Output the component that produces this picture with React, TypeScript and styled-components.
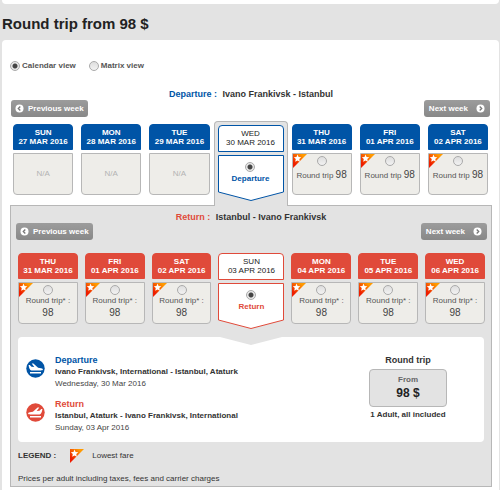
import { useId, useState } from 'react';
import styled, { createGlobalStyle, css } from 'styled-components';

const BLUE = '#0054a6';
const RED = '#e04a3a';
const GREY = '#e3e3e3';
const LINE = '#b7b7b7';

const GlobalStyle = createGlobalStyle`
  * { box-sizing: border-box; }
  body {
    margin: 0;
    background: ${GREY};
    color: #333;
    font: 8px/12px "Liberation Sans", Arial, sans-serif;
  }
  button, input { font: inherit; margin: 0; }
  h1, h2, h3, p { margin: 0; }
`;

const Page = styled.main`
  padding: 0 1px 0 2px;
`;

const PreviousPanel = styled.div`
  height: 4px;
  background: #fff;
  border-radius: 0 0 4px 4px;
`;

const Title = styled.h1`
  padding: 11px 0 7px;
  font-size: 15px;
  line-height: 18px;
  color: #222;
`;

const Panel = styled.section`
  padding: 20px 7px 4px 8px;
  background: #fff;
  border-radius: 4px 4px 0 0;
`;

const ViewSwitch = styled.div`
  display: flex;
  gap: 13px;
  font-weight: bold;
  color: #555;
`;

const Option = styled.label`
  display: flex;
  align-items: center;
  gap: 2px;
`;

const Radio = styled.input.attrs({ type: 'radio' })`
  appearance: none;
  flex: none;
  width: 10px;
  height: 10px;
  border: 1px solid #aaa;
  border-radius: 50%;
  background: linear-gradient(#dedede, #f2f2f2);
  &:checked {
    background: radial-gradient(circle, #444 0 2px, #e8e8e8 3px);
  }
`;

const OutboundTop = styled.header`
  padding-top: 16px;
`;

const Heading = styled.h2`
  text-align: center;
  font-size: 9px;
  line-height: 12px;
  color: #333;
`;

const Tinted = styled.span<{ $tint: string }>`
  margin-right: 3px;
  color: ${(p) => p.$tint};
`;

const WeekNav = styled.div<{ $inset?: boolean }>`
  display: flex;
  justify-content: space-between;
  padding: ${(p) => (p.$inset ? '0 4px 0 5px' : '0 2px 0 1px')};
`;

const NavButton = styled.button`
  display: flex;
  align-items: center;
  gap: 4px;
  height: 17px;
  padding: 0 4px;
  border: 0;
  border-radius: 3px;
  background: linear-gradient(#9c9c9c, #888);
  color: #fff;
  font-weight: bold;
`;

const NextButton = styled(NavButton)`
  gap: 8px;
  padding: 0 5px;
`;

const Week = styled.div<{ $gap: number }>`
  display: grid;
  grid-template-columns: repeat(3, minmax(0, 1fr)) 66px repeat(3, minmax(0, 1fr));
  column-gap: ${(p) => p.$gap}px;
  align-items: start;
`;

const OutboundWeek = styled(Week)`
  padding: 0 4px 0 3px;
  margin-top: 7px;
`;

const ReturnWeek = styled(Week)`
  padding: 0 6px 0 7px;
  margin-top: 13px;
`;

const Day = styled.div`
  display: grid;
  row-gap: 3px;
`;

const SelectedTab = styled.div`
  position: relative;
  margin: -3px -4px -1px;
  padding: 3px 3px 5px;
  border: 1px solid ${LINE};
  border-bottom: 0;
  border-radius: 4px 4px 0 0;
  background: ${GREY};
`;

const DayHead = styled.div<{ $tint: string; $selected?: boolean }>`
  height: 26px;
  padding-top: 3px;
  border: 1px solid ${(p) => p.$tint};
  border-radius: 4px 4px 0 0;
  background: ${(p) => p.$tint};
  color: #fff;
  text-align: center;
  font-weight: bold;
  line-height: 9px;
  white-space: nowrap;
  ${(p) =>
    p.$selected &&
    css`
      height: 27px;
      background: #fff;
      color: #222;
      font-weight: normal;
    `}
`;

const Fare = styled.label`
  position: relative;
  display: flex;
  flex-direction: column;
  align-items: center;
  height: 42px;
  padding-top: 2px;
  border: 1px solid ${LINE};
  border-radius: 0 0 4px 4px;
  background: #eeede9;
  color: #555;
  white-space: nowrap;
`;

const FareText = styled.span<{ $inline?: boolean }>`
  margin-top: ${(p) => (p.$inline ? 3 : 0)}px;
  line-height: 12px;
  text-align: center;
`;

const Amount = styled.span<{ $block?: boolean }>`
  display: ${(p) => (p.$block ? 'block' : 'inline')};
  font-size: 10px;
  line-height: 11px;
  color: #444;
`;

const Missing = styled.div`
  height: 42px;
  border: 1px solid ${LINE};
  border-radius: 0 0 4px 4px;
  background: #eeede9;
  color: #b3b3b3;
  line-height: 40px;
  text-align: center;
`;

const Chosen = styled.label<{ $tint: string }>`
  position: relative;
  display: flex;
  flex-direction: column;
  align-items: center;
  height: 46px;
  padding-top: 7px;
  color: ${(p) => p.$tint};
  font-weight: bold;
  line-height: 13px;
`;

const Arrow = styled.svg`
  position: absolute;
  inset: 0;
  width: 100%;
  height: 100%;
`;

const Front = styled.span`
  position: relative;
  display: flex;
  flex-direction: column;
  align-items: center;
`;

const FlagSvg = styled.svg<{ $corner?: boolean }>`
  display: block;
  width: 14px;
  height: 14px;
  ${(p) =>
    p.$corner &&
    css`
      position: absolute;
      top: 0;
      left: 0;
    `}
`;

const ReturnPanel = styled.section`
  border: 1px solid ${LINE};
  background: ${GREY};
  padding-top: 5px;
`;

const Summary = styled.section`
  position: relative;
  display: flex;
  justify-content: space-between;
  margin: 8px 7px 0;
  padding: 17px 37px 8px 8px;
  border-radius: 4px;
  background: #fff;
`;

const Notch = styled.svg`
  position: absolute;
  top: 0;
  left: 50%;
  width: 62px;
  height: 8px;
  margin-left: -31px;
`;

const Legs = styled.div`
  display: grid;
  row-gap: 8px;
`;

const Leg = styled.article`
  display: flex;
  gap: 10px;
  color: #444;
`;

const LegIcon = styled.svg`
  flex: none;
  width: 19px;
  height: 19px;
  margin-top: 5px;
`;

const LegTitle = styled.h3<{ $tint: string }>`
  font-size: 9px;
  line-height: 12px;
  color: ${(p) => p.$tint};
`;

const Route = styled.p`
  font-weight: bold;
  color: #333;
`;

const Total = styled.div`
  text-align: center;
  font-weight: bold;
`;

const TotalTitle = styled.h3`
  font-size: 9px;
  line-height: 12px;
`;

const PriceBox = styled.div`
  width: 78px;
  height: 38px;
  margin: 3px 0 2px;
  padding-top: 4px;
  border: 1px solid ${LINE};
  border-radius: 4px;
  background: ${GREY};
  color: #666;
`;

const Price = styled.p`
  font-size: 12px;
  line-height: 14px;
  color: #222;
`;

const Legend = styled.div`
  display: flex;
  align-items: center;
  padding: 7px 7px 0;
  gap: 8px;
`;

const LegendTitle = styled.strong`
  margin-right: 6px;
`;

const Note = styled.p`
  padding: 10px 7px 1px;
`;

function Flag({ corner }: { corner?: boolean }) {
  const id = useId();
  return (
    <FlagSvg $corner={corner} viewBox="0 0 14 14" aria-hidden="true">
      <defs>
        <linearGradient id={id} x1="1" y1="0" x2="0" y2="1">
          <stop offset="0.2" stopColor="#ff9a00" />
          <stop offset="0.8" stopColor="#ee1c00" />
        </linearGradient>
      </defs>
      <path d="M0 0H14L0 14Z" fill={`url(#${id})`} />
      <path d="M4.5 0.6l1.1 2.4 2.7.3-2 1.8.6 2.6-2.4-1.3-2.3 1.3.6-2.6-2-1.8 2.700-.3z" fill="#fff" />
    </FlagSvg>
  );
}

function Chevron({ next }: { next?: boolean }) {
  return (
    <svg width="9" height="9" viewBox="0 0 9 9" aria-hidden="true">
      <circle cx="4.5" cy="4.5" r="4" fill="#fff" />
      <path d={next ? 'M3.7 2.5l2 2-2 2' : 'M5.3 2.5l-2 2 2 2'} fill="none" stroke="#777" strokeWidth="1.3" />
    </svg>
  );
}

function PlaneIcon({ returning }: { returning?: boolean }) {
  return (
    <LegIcon viewBox="0 0 19 19" aria-hidden="true">
      <circle cx="9.5" cy="9.5" r="9.2" fill={returning ? RED : BLUE} />
      <g fill="#fff">
        <path
          transform={returning ? 'translate(19 0) scale(-1 1)' : undefined}
          d="M2.6 5.9l1.200.1 1.700 1.800 2.800.3-2.600-3.700 1.700.1 4.700 4.300 3 .4c1.300.2 1.900.7 1.800 1.400-.1.6-.9.9-2.200.9H6.200C4 11.500 3 9 2.600 5.900z"
        />
        <path d="M4 13h11v1.500H4z" />
      </g>
    </LegIcon>
  );
}

function PreviousWeek() {
  return (
    <NavButton type="button">
      <Chevron />
      Previous week
    </NavButton>
  );
}

function NextWeek() {
  return (
    <NextButton type="button">
      Next week
      <Chevron next />
    </NextButton>
  );
}

type DayInfo = { day: string; date: string; fare?: number; chosen?: boolean };

const outbound: DayInfo[] = [
  { day: 'SUN', date: '27 MAR 2016' },
  { day: 'MON', date: '28 MAR 2016' },
  { day: 'TUE', date: '29 MAR 2016' },
  { day: 'WED', date: '30 MAR 2016', chosen: true },
  { day: 'THU', date: '31 MAR 2016', fare: 98 },
  { day: 'FRI', date: '01 APR 2016', fare: 98 },
  { day: 'SAT', date: '02 APR 2016', fare: 98 },
];

const inbound: DayInfo[] = [
  { day: 'THU', date: '31 MAR 2016', fare: 98 },
  { day: 'FRI', date: '01 APR 2016', fare: 98 },
  { day: 'SAT', date: '02 APR 2016', fare: 98 },
  { day: 'SUN', date: '03 APR 2016', chosen: true },
  { day: 'MON', date: '04 APR 2016', fare: 98 },
  { day: 'TUE', date: '05 APR 2016', fare: 98 },
  { day: 'WED', date: '06 APR 2016', fare: 98 },
];

type CellProps = { info: DayInfo; tint: string; group: string; value: string; onPick: (date: string) => void };

function DayCell({ info, tint, group, value, onPick }: CellProps) {
  const radio = (
    <Radio name={group} checked={value === info.date} onChange={() => onPick(info.date)} />
  );
  const returning = group === 'return';
  return (
    <Day>
      <DayHead $tint={tint} $selected={info.chosen}>
        {info.day}
        <br />
        {info.date}
      </DayHead>
      {info.chosen ? (
        <Chosen $tint={tint}>
          <Arrow viewBox="0 0 66 46" preserveAspectRatio="none" aria-hidden="true">
            <path d="M.5.5H65.5V37L33 45.5.5 37Z" fill="#fff" stroke={tint} />
          </Arrow>
          <Front>
            {radio}
            {returning ? 'Return' : 'Departure'}
          </Front>
        </Chosen>
      ) : info.fare ? (
        <Fare>
          <Flag corner />
          {radio}
          <FareText $inline={!returning}>
            {returning ? 'Round trip* : ' : 'Round trip '}
            <Amount $block={returning}>{info.fare}</Amount>
          </FareText>
        </Fare>
      ) : (
        <Missing>N/A</Missing>
      )}
    </Day>
  );
}

export default function App() {
  const [view, setView] = useState('calendar');
  const [out, setOut] = useState('30 MAR 2016');
  const [back, setBack] = useState('03 APR 2016');

  return (
    <>
      <GlobalStyle />
      <Page>
        <PreviousPanel />
        <Title>Round trip from 98 $</Title>
        <Panel>
          <ViewSwitch>
            <Option>
              <Radio name="view" checked={view === 'calendar'} onChange={() => setView('calendar')} />
              Calendar view
            </Option>
            <Option>
              <Radio name="view" checked={view === 'matrix'} onChange={() => setView('matrix')} />
              Matrix view
            </Option>
          </ViewSwitch>
          <OutboundTop>
            <Heading>
              <Tinted $tint={BLUE}>Departure :</Tinted> Ivano Frankivsk - Istanbul
            </Heading>
            <WeekNav>
              <PreviousWeek />
              <NextWeek />
            </WeekNav>
          </OutboundTop>
          <OutboundWeek $gap={8}>
            {outbound.map((info) => {
              const cell = (
                <DayCell key={info.date} info={info} tint={BLUE} group="departure" value={out} onPick={setOut} />
              );
              return info.chosen ? <SelectedTab key={info.date}>{cell}</SelectedTab> : cell;
            })}
          </OutboundWeek>
          <ReturnPanel>
            <Heading>
              <Tinted $tint={RED}>Return :</Tinted> Istanbul - Ivano Frankivsk
            </Heading>
            <WeekNav $inset>
              <PreviousWeek />
              <NextWeek />
            </WeekNav>
            <ReturnWeek $gap={7}>
              {inbound.map((info) => (
                <DayCell key={info.date} info={info} tint={RED} group="return" value={back} onPick={setBack} />
              ))}
            </ReturnWeek>
            <Summary>
              <Notch viewBox="0 0 62 8" aria-hidden="true">
                <path d="M0 0H62L31 8Z" fill={GREY} />
              </Notch>
              <Legs>
                <Leg>
                  <PlaneIcon />
                  <div>
                    <LegTitle $tint={BLUE}>Departure</LegTitle>
                    <Route>Ivano Frankivsk, International - Istanbul, Ataturk</Route>
                    <p>Wednesday, 30 Mar 2016</p>
                  </div>
                </Leg>
                <Leg>
                  <PlaneIcon returning />
                  <div>
                    <LegTitle $tint={RED}>Return</LegTitle>
                    <Route>Istanbul, Ataturk - Ivano Frankivsk, International</Route>
                    <p>Sunday, 03 Apr 2016</p>
                  </div>
                </Leg>
              </Legs>
              <Total>
                <TotalTitle>Round trip</TotalTitle>
                <PriceBox>
                  From
                  <Price>98 $</Price>
                </PriceBox>
                1 Adult, all included
              </Total>
            </Summary>
            <Legend>
              <LegendTitle>LEGEND :</LegendTitle>
              <Flag />
              Lowest fare
            </Legend>
            <Note>Prices per adult including taxes, fees and carrier charges</Note>
          </ReturnPanel>
        </Panel>
      </Page>
    </>
  );
}
